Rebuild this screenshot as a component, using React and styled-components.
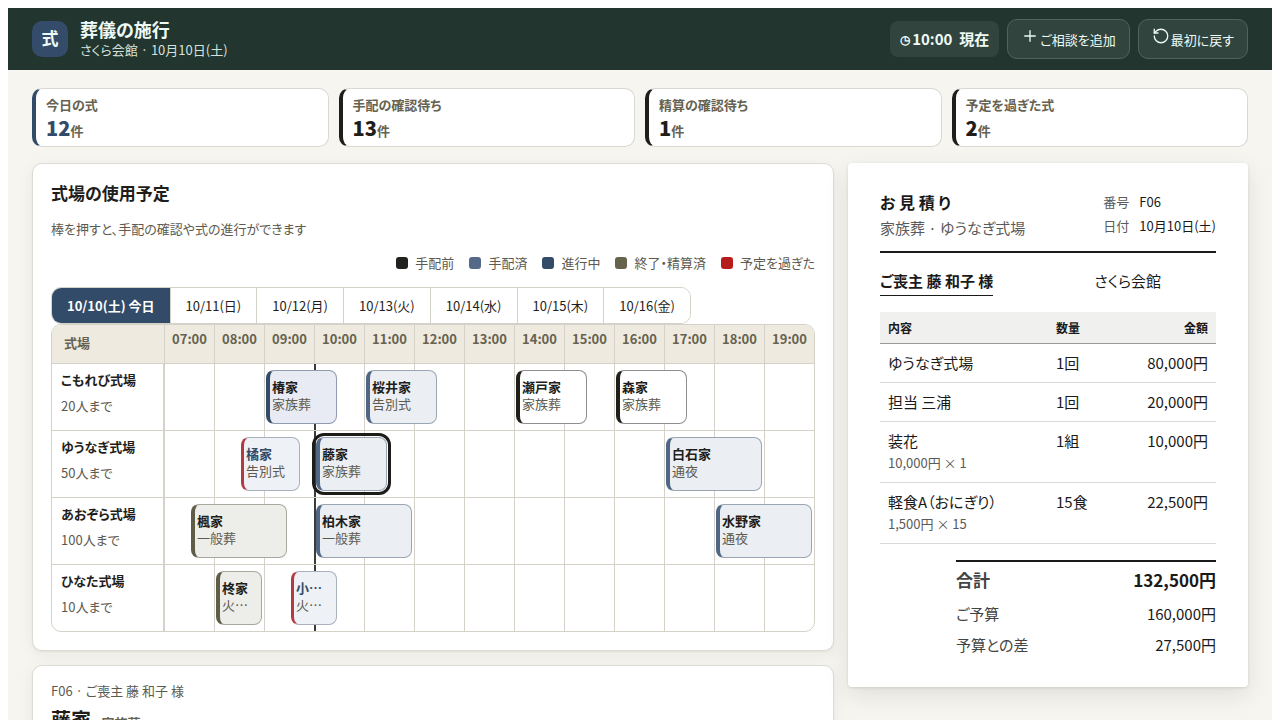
import React from "react";
import styled, { createGlobalStyle, css } from "styled-components";
import { Plus, RotateCcw } from "lucide-react";

const Global = createGlobalStyle`
  *, *::before, *::after { box-sizing: border-box; }
  body {
    margin: 8px;
    background: #fff;
    font-family: "Noto Sans CJK JP", sans-serif;
    font-feature-settings: "palt";
    font-size: 13px;
    line-height: 20px;
    color: #1f1e1a;
  }
  h1, h2, p, dl, dd { margin: 0; }
  button { font: inherit; font-feature-settings: inherit; color: inherit; cursor: pointer; }
`;

const Page = styled.div`
  min-height: calc(100vh - 8px);
  background: #f6f5ef;
`;

const TopBar = styled.header`
  display: flex;
  align-items: center;
  gap: 12px;
  height: 62px;
  padding: 0 24px;
  background: #22352f;
  color: #eefaf5;
`;

const Crest = styled.div`
  display: grid;
  place-items: center;
  width: 36px;
  height: 36px;
  padding-bottom: 2px;
  border-radius: 10px;
  background: #344b69;
  font-size: 17px;
  font-weight: 700;
`;

const Heading = styled.div`
  flex: 1;
  h1 { font-size: 18px; line-height: 22px; font-weight: 700; }
  p { color: #d5e2dc; line-height: 20px; }
`;

const Actions = styled.div`
  display: flex;
  align-items: center;
  gap: 8px;
`;

const Clock = styled.div`
  display: flex;
  align-items: center;
  gap: 2px;
  height: 36px;
  padding: 0 10px;
  border-radius: 8px;
  background: #31443e;
  font-size: 15px;
  font-weight: 700;
  white-space: pre;
  span { font-size: 12px; }
`;

const BarButton = styled.button`
  height: 40px;
  padding: 0 13px 2px;
  border: 1px solid #52635d;
  border-radius: 10px;
  background: #31443e;
  white-space: nowrap;
  svg { vertical-align: baseline; margin-right: 1px; }
`;

const Stats = styled.section`
  display: grid;
  grid-template-columns: repeat(4, 1fr);
  gap: 10px;
  padding: 18px 24px 16px;
`;

const Stat = styled.div`
  height: 59px;
  padding: 5px 10px;
  border: 1px solid #d9d8d2;
  border-left: 4px solid ${(p) => p.$tone};
  border-radius: 10px;
  background: #fff;
  font-weight: 700;
  color: #66624f;
  strong { font-size: 20px; color: ${(p) => p.$tone}; }
  p { line-height: 22px; }
  p + p { line-height: 24px; }
`;

const Main = styled.main`
  display: grid;
  grid-template-columns: minmax(0, 1fr) 400px;
  align-items: start;
  gap: 14px;
  padding: 0 24px 24px;
`;

const Column = styled.div`
  display: grid;
  gap: 14px;
`;

const Panel = styled.section`
  padding: 18px;
  border: 1px solid #dddcd4;
  border-radius: 10px;
  background: #fff;
  box-shadow: 0 1px 2px rgba(30, 30, 20, 0.06), 0 4px 16px rgba(30, 30, 20, 0.06);
`;

const PanelTitle = styled.h2`
  font-size: 17px;
  line-height: 22px;
`;

const Hint = styled.p`
  margin-top: 15px;
  color: #5d5a4f;
`;

const Legend = styled.div`
  display: flex;
  justify-content: flex-end;
  gap: 15px;
  margin: 14px 0;
  color: #5d5a4f;
`;

const Key = styled.span`
  display: flex;
  align-items: center;
  gap: 7px;
  &::before {
    content: "";
    width: 12px;
    height: 12px;
    border-radius: 3px;
    background: ${(p) => p.$tone};
  }
`;

const Days = styled.div`
  display: flex;
  width: fit-content;
  border: 1px solid #d4d2c8;
  border-radius: 10px;
  overflow: hidden;
`;

const Day = styled.button`
  height: 35px;
  padding: 0 15px;
  border: 0;
  border-left: 1px solid #d4d2c8;
  background: #fff;
  white-space: nowrap;
  &:first-child { border-left: 0; }
  ${(p) => p.$active && css`
    background: #324b69;
    color: #fff;
    font-weight: 700;
  `}
`;

const Board = styled.div`
  border: 1px solid #d4d2c8;
  border-radius: 10px;
  overflow: hidden;
`;

const BoardRow = styled.div`
  display: grid;
  grid-template-columns: 112px minmax(0, 1fr);
  height: 67px;
  border-bottom: 1px solid #d4d2c8;
  &:last-child { height: 66px; border-bottom: 0; }
`;

const BoardHead = styled(BoardRow)`
  height: 39px;
  background: #eeeadf;
  color: #66624f;
  font-weight: 700;
`;

const HeadLabel = styled.div`
  padding: 8px 12px;
`;

const Hours = styled.div`
  position: relative;
  display: grid;
  grid-template-columns: repeat(13, minmax(0, 1fr));
`;

const Hour = styled.div`
  padding-top: 4px;
  border-left: 1px solid #d4d2c8;
  text-align: center;
`;

const Hall = styled.div`
  padding: 6px 9px;
  border-right: 1px solid #d9d3bf;
  p { color: #5d5a4f; margin-top: 6px; }
`;

const NowLine = styled.div`
  position: absolute;
  top: 0;
  bottom: 0;
  width: 2px;
  background: #3c3b38;
`;

const looks = {
  before: { edge: "#1f1e1a", line: "#8f8e8a", fill: "#ffffff" },
  ready: { edge: "#4f6685", line: "#9aa5b3", fill: "#ebeff4" },
  live: { edge: "#324b69", line: "#8f9bb0", fill: "#e8ebf4" },
  done: { edge: "#5f5d48", line: "#a9a89e", fill: "#edeeea" },
  late: { edge: "#b23a42", line: "#a8b0bd", fill: "#eef1f5" },
};

const Slot = styled.button`
  position: absolute;
  top: 6px;
  display: flex;
  flex-direction: column;
  justify-content: center;
  height: 54px;
  padding: 0 2px 4px;
  border: 1px solid ${(p) => looks[p.$look].line};
  border-left: ${(p) => (p.$look === "late" ? 3 : 4)}px solid ${(p) => looks[p.$look].edge};
  border-radius: 8px;
  background: ${(p) => looks[p.$look].fill};
  color: #5d5a4f;
  line-height: 17px;
  text-align: left;
  white-space: nowrap;
  overflow: hidden;
  strong { color: ${(p) => (p.$look === "late" ? "#324b69" : "#1f1e1a")}; }
  ${(p) => p.$selected && css`
    outline: 3px solid #1c1c18;
    outline-offset: 1px;
  `}
`;

const CaseMeta = styled.p`
  line-height: 14px;
  color: #5d5a4f;
`;

const CaseTitle = styled.h2`
  margin-top: 8px;
  font-size: 20px;
  line-height: 28px;
  small { margin-left: 6px; font-size: 13px; color: #66624f; }
`;

const Sheet = styled.aside`
  padding: 28px 32px 27px;
  border-radius: 4px;
  background: #fff;
  box-shadow: 0 1px 3px rgba(30, 30, 20, 0.12), 0 8px 24px rgba(30, 30, 20, 0.1);
  color: #1a1a1a;
  font-size: 15px;
`;

const SheetHead = styled.div`
  display: flex;
  justify-content: space-between;
  height: 62px;
  border-bottom: 2px solid #1a1a1a;
  h2 { font-size: 16px; line-height: 22px; }
  p { color: #5a5a5a; line-height: 30px; }
`;

const Meta = styled.dl`
  display: grid;
  grid-template-columns: auto auto;
  align-content: start;
  gap: 2px 10px;
  font-size: 13px;
  line-height: 22px;
  dt { color: #5a5a5a; }
`;

const Parties = styled.div`
  display: grid;
  grid-template-columns: 3fr 2fr;
  column-gap: 32px;
  margin: 16px 0;
  line-height: 24px;
  strong { justify-self: start; padding-bottom: 2px; border-bottom: 1px solid #1a1a1a; }
`;

const Items = styled.table`
  width: 100%;
  table-layout: fixed;
  border-collapse: separate;
  border-spacing: 0;
  th {
    height: 32px;
    padding: 0 8px;
    border-bottom: 1px solid #999;
    background: #f0f0ef;
    font-size: 12px;
    text-align: left;
  }
  td {
    padding: 8px;
    border-bottom: 1px solid #d9d9d9;
    line-height: 22px;
    vertical-align: top;
  }
  small { display: block; font-size: 13px; color: #5a5a5a; }
  th:first-child { width: 50%; }
  th:last-child, td:last-child { text-align: right; }
`;

const Totals = styled.dl`
  width: 260px;
  margin: 16px 0 0 auto;
  border-top: 2px solid #1a1a1a;
`;

const Total = styled.div`
  display: flex;
  justify-content: space-between;
  line-height: 31px;
  dt { color: #444; }
  ${(p) => p.$main && css`
    font-size: 17px;
    font-weight: 700;
    line-height: 36px;
  `}
`;

const stats = [
  ["今日の式", 12, "#324b69"],
  ["手配の確認待ち", 13, "#1f1e1a"],
  ["精算の確認待ち", 1, "#1f1e1a"],
  ["予定を過ぎた式", 2, "#1f1e1a"],
];

const legend = [
  ["手配前", "#22211d"],
  ["手配済", "#546a88"],
  ["進行中", "#324b69"],
  ["終了・精算済", "#66644d"],
  ["予定を過ぎた", "#b71c1c"],
];

const days = ["10/10(土) 今日", "10/11(日)", "10/12(月)", "10/13(火)", "10/14(水)", "10/15(木)", "10/16(金)"];

const hours = Array.from({ length: 13 }, (_, i) => i + 7);

const halls = [
  { name: "こもれび式場", seats: 20, slots: [
    ["椿家", "家族葬", 9, 1.5, "live"],
    ["桜井家", "告別式", 11, 1.5, "ready"],
    ["瀬戸家", "家族葬", 14, 1.5, "before"],
    ["森家", "家族葬", 16, 1.5, "before"],
  ] },
  { name: "ゆうなぎ式場", seats: 50, slots: [
    ["橘家", "告別式", 8.5, 1.25, "late"],
    ["藤家", "家族葬", 10, 1.5, "ready", true],
    ["白石家", "通夜", 17, 2, "ready"],
  ] },
  { name: "あおぞら式場", seats: 100, slots: [
    ["楓家", "一般葬", 7.5, 2, "done"],
    ["柏木家", "一般葬", 10, 2, "ready"],
    ["水野家", "通夜", 18, 2, "ready"],
  ] },
  { name: "ひなた式場", seats: 10, slots: [
    ["柊家", "火…", 8, 1, "done"],
    ["小…", "火…", 9.5, 1, "late"],
  ] },
];

const items = [
  ["ゆうなぎ式場", "1回", "80,000円"],
  ["担当 三浦", "1回", "20,000円"],
  ["装花", "1組", "10,000円", "10,000円 × 1"],
  ["軽食A（おにぎり）", "15食", "22,500円", "1,500円 × 15"],
];

const share = (h) => (h / hours.length) * 100;

export default function App() {
  return (
    <Page>
      <Global />
      <TopBar>
        <Crest>式</Crest>
        <Heading>
          <h1>葬儀の施行</h1>
          <p>さくら会館 · 10月10日(土)</p>
        </Heading>
        <Actions>
          <Clock><span>◷</span>10:00  現在</Clock>
          <BarButton type="button"><Plus size={18} strokeWidth={1.75} />ご相談を追加</BarButton>
          <BarButton type="button"><RotateCcw size={18} strokeWidth={1.75} />最初に戻す</BarButton>
        </Actions>
      </TopBar>
      <Stats>
        {stats.map(([label, n, tone]) => (
          <Stat key={label} $tone={tone}>
            <p>{label}</p>
            <p><strong>{n}</strong>件</p>
          </Stat>
        ))}
      </Stats>
      <Main>
        <Column>
          <Panel>
            <PanelTitle>式場の使用予定</PanelTitle>
            <Hint>棒を押すと、手配の確認や式の進行ができます</Hint>
            <Legend>
              {legend.map(([label, tone]) => <Key key={label} $tone={tone}>{label}</Key>)}
            </Legend>
            <Days>
              {days.map((d, i) => <Day key={d} type="button" $active={i === 0}>{d}</Day>)}
            </Days>
            <Board>
              <BoardHead>
                <HeadLabel>式場</HeadLabel>
                <Hours>
                  {hours.map((h) => <Hour key={h}>{String(h).padStart(2, "0")}:00</Hour>)}
                </Hours>
              </BoardHead>
              {halls.map((hall) => (
                <BoardRow key={hall.name}>
                  <Hall>
                    <strong>{hall.name}</strong>
                    <p>{hall.seats}人まで</p>
                  </Hall>
                  <Hours>
                    {hours.map((h) => <Hour key={h} />)}
                    <NowLine style={{ left: `${share(3)}%` }} />
                    {hall.slots.map(([name, kind, start, len, look, selected]) => (
                      <Slot
                        key={name}
                        type="button"
                        $look={look}
                        $selected={selected}
                        style={{ left: `calc(${share(start - 7)}% + 2px)`, width: `calc(${share(len)}% - 4px)` }}
                      >
                        <strong>{name}</strong>
                        <span>{kind}</span>
                      </Slot>
                    ))}
                  </Hours>
                </BoardRow>
              ))}
            </Board>
          </Panel>
          <Panel>
            <CaseMeta>F06 · ご喪主 藤 和子 様</CaseMeta>
            <CaseTitle>藤家 <small>家族葬</small></CaseTitle>
          </Panel>
        </Column>
        <Sheet>
          <SheetHead>
            <div>
              <h2>お 見 積 り</h2>
              <p>家族葬 · ゆうなぎ式場</p>
            </div>
            <Meta>
              <dt>番号</dt><dd>F06</dd>
              <dt>日付</dt><dd>10月10日(土)</dd>
            </Meta>
          </SheetHead>
          <Parties>
            <strong>ご喪主 藤 和子 様</strong>
            <span>さくら会館</span>
          </Parties>
          <Items>
            <thead>
              <tr><th>内容</th><th>数量</th><th>金額</th></tr>
            </thead>
            <tbody>
              {items.map(([name, qty, price, note]) => (
                <tr key={name}>
                  <td>{name}{note && <small>{note}</small>}</td>
                  <td>{qty}</td>
                  <td>{price}</td>
                </tr>
              ))}
            </tbody>
          </Items>
          <Totals>
            <Total $main><dt>合計</dt><dd>132,500円</dd></Total>
            <Total><dt>ご予算</dt><dd>160,000円</dd></Total>
            <Total><dt>予算との差</dt><dd>27,500円</dd></Total>
          </Totals>
        </Sheet>
      </Main>
    </Page>
  );
}
